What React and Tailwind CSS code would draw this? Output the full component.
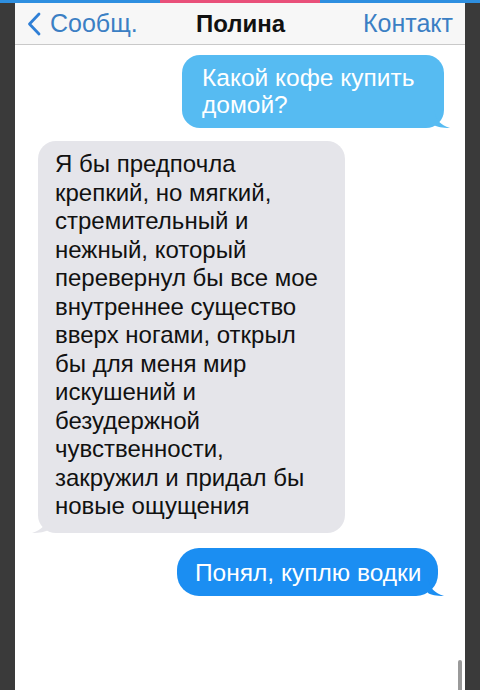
import React from 'react';

function Chevron() {
  return (
    <svg width="16" height="24" viewBox="0 0 16 24" className="shrink-0">
      <path d="M13 2 L3.5 12 L13 22" fill="none" stroke="#2f7fd6" strokeWidth="2.8" strokeLinecap="round" strokeLinejoin="round" />
    </svg>
  );
}

function Tail({ color }) {
  return (
    <svg width="16" height="18" viewBox="0 0 16 18" className="absolute -right-[6px] bottom-0">
      <path d="M0 0 C2 10 6 15 16 18 C8 18 3 17 0 15 Z" fill={color} />
    </svg>
  );
}

function TailLeft() {
  return (
    <svg width="16" height="18" viewBox="0 0 16 18" className="absolute -left-[6px] bottom-0">
      <path d="M16 0 C14 10 10 15 0 18 C8 18 13 17 16 15 Z" fill="#e5e5ea" />
    </svg>
  );
}

const reply = [
  'Я бы предпочла',
  'крепкий, но мягкий,',
  'стремительный и',
  'нежный, который',
  'перевернул бы все мое',
  'внутреннее существо',
  'вверх ногами, открыл',
  'бы для меня мир',
  'искушений и',
  'безудержной',
  'чувственности,',
  'закружил и придал бы',
  'новые ощущения',
];

export default function App() {
  return (
    <div className="w-[480px] h-[690px] flex flex-col bg-[#3a3a3a] font-['Liberation_Sans',Arial,sans-serif] overflow-hidden">
      <div className="h-[3px] flex shrink-0">
        <div className="w-[160px] bg-[#2e8fe0]" />
        <div className="w-[160px] bg-[#e9507a]" />
        <div className="flex-1 bg-[#2e8fe0]" />
      </div>
      <div className="flex flex-1 min-h-0">
        <div className="w-[15px] bg-[#3a3a3a]" />
        <div className="flex-1 flex flex-col bg-white relative">
          <div className="h-[42px] bg-[#f7f7f7] border-b border-[#c9c9c9] flex items-center pl-[11px] pr-[12px] shrink-0">
            <div className="flex items-center gap-[8px] w-[150px]">
              <Chevron />
              <span className="text-[25px] text-[#3b7fc4] leading-none">Сообщ.</span>
            </div>
            <div className="flex-1 text-center text-[24px] font-bold text-[#111] leading-none pr-[28px]">Полина</div>
            <div className="w-[120px] text-right text-[25px] text-[#3b7fc4] leading-none">Контакт</div>
          </div>

          <div className="flex flex-col px-[23px] pt-[10px]">
            <div className="self-end relative bg-[#56bbf2] rounded-[18px] pl-[20px] pr-[10px] pt-[9px] pb-[10px] text-white text-[24.5px] leading-[27px] w-[262px] -mr-[2px]">
              <div className="whitespace-nowrap">Какой кофе купить</div>
              <div>домой?</div>
              <Tail color="#56bbf2" />
            </div>

            <div className="self-start relative bg-[#e5e5ea] rounded-[18px] pl-[17px] pr-[10px] pt-[9px] pb-[12px] mt-[13px] text-[#111] text-[24px] leading-[28.5px] w-[307px]">
              {reply.map((l) => (
                <div key={l} className="whitespace-nowrap">{l}</div>
              ))}
              <TailLeft />
            </div>

            <div className="self-end relative bg-[#1b8ef2] rounded-[22px] pl-[18px] pr-[12px] pt-[11px] pb-[10px] mt-[15px] mr-[4px] text-white text-[24.5px] leading-[27px] w-[261px]">
              <div className="whitespace-nowrap">Понял, куплю водки</div>
              <Tail color="#1b8ef2" />
            </div>
          </div>

          <div className="absolute right-[3px] bottom-0 w-[4px] h-[30px] bg-[#9a9a9a] rounded-t-sm" />
        </div>
        <div className="w-[15px] bg-[#3a3a3a]" />
      </div>
    </div>
  );
}
